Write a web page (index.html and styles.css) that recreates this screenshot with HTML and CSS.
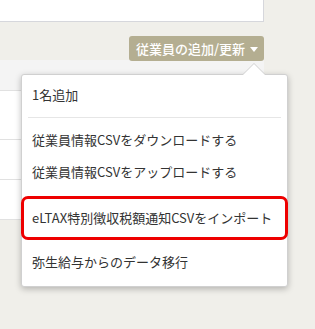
FILE: index.html
```html
<!DOCTYPE html>
<html lang="ja">
<head>
    <meta charset="UTF-8">
    <title>従業員一覧</title>
    <link rel="stylesheet" href="styles.css">
</head>
<body>

    <div class="page">
        <!-- Card above (cut off) -->
        <div class="top-card"></div>

        <!-- Toolbar with dropdown button -->
        <div class="toolbar">
            <button class="menu-button">従業員の追加/更新 <span class="caret"></span></button>
        </div>

        <!-- Employee table behind the menu -->
        <table class="employee-table">
            <thead>
                <tr><th>&nbsp;</th></tr>
            </thead>
            <tbody>
                <tr class="row-tall"><td>&nbsp;</td></tr>
                <tr><td>&nbsp;</td></tr>
                <tr><td>&nbsp;</td></tr>
            </tbody>
        </table>

        <!-- Dropdown menu -->
        <ul class="dropdown">
            <li><a href="#">1名追加</a></li>
            <li class="divider"></li>
            <li><a href="#">従業員情報CSVをダウンロードする</a></li>
            <li><a href="#">従業員情報CSVをアップロードする</a></li>
            <li class="highlight"><a href="#">eLTAX特別徴収税額通知CSVをインポート</a></li>
            <li><a href="#">弥生給与からのデータ移行</a></li>
        </ul>
    </div>

</body>
</html>
```

FILE: styles.css
```css
/* General Styling */
body {
    margin: 0;
    background-color: #f0efea;
    font-family: "Noto Sans CJK JP", "Noto Sans", sans-serif;
    font-size: 13px;
    color: #333333;
}

.page {
    position: relative;
    width: 264px;
    min-height: 329px;
}

/* Card at top */
.top-card {
    height: 21px;
    background-color: #ffffff;
    border-right: 1px solid #d6d7dc;
    border-bottom: 1px solid #d6d7dc;
}

/* Toolbar */
.toolbar {
    display: flex;
    justify-content: flex-end;
    padding-top: 14px;
    height: 38px;
    box-sizing: border-box;
}

.menu-button {
    display: flex;
    align-items: center;
    gap: 5px;
    height: 25px;
    padding: 0 6px 0 7px;
    border: none;
    border-radius: 3px;
    background-color: #b4ae91;
    color: #ffffff;
    font-family: inherit;
    font-size: 13px;
    font-weight: 500;
    line-height: 25px;
    cursor: pointer;
}

.caret {
    width: 0;
    height: 0;
    border-left: 4.5px solid transparent;
    border-right: 4.5px solid transparent;
    border-top: 5px solid #ffffff;
    margin-top: 1px;
}

/* Table */
.employee-table {
    width: 100%;
    border-collapse: collapse;
    background-color: #ffffff;
}

.employee-table th,
.employee-table td {
    padding: 0;
    height: 39px;
    border-bottom: 1px solid #e1e1e1;
}

.employee-table th {
    height: 30px;
    background-color: #f4f4f4;
}

.employee-table .row-tall td {
    height: 48px;
}

/* Dropdown */
.dropdown {
    position: absolute;
    left: 21px;
    top: 74px;
    width: 267px;
    margin: 0;
    padding: 4px 0 8px;
    list-style: none;
    background-color: #ffffff;
    border: 1px solid #d0d0d0;
    border-radius: 3px;
    box-sizing: border-box;
    box-shadow: 0 2px 6px rgba(0, 0, 0, 0.25);
}

.dropdown::before,
.dropdown::after {
    content: "";
    position: absolute;
    width: 0;
    height: 0;
    border-style: solid;
}

.dropdown::before {
    top: -12px;
    left: 220px;
    border-width: 0 12px 12px 12px;
    border-color: transparent transparent #d0d0d0 transparent;
}

.dropdown::after {
    top: -11px;
    left: 221px;
    border-width: 0 11px 11px 11px;
    border-color: transparent transparent #ffffff transparent;
}

.dropdown a {
    display: block;
    padding: 0 10px;
    line-height: 32px;
    color: #333333;
    text-decoration: none;
    white-space: nowrap;
}

.dropdown .divider {
    height: 1px;
    margin: 6px 6px 6px 6px;
    background-color: #e6e6e6;
}

.dropdown .highlight {
    margin: 8px -1px 6px;
    border: 3px solid #ee0000;
    border-radius: 7px;
}

.dropdown .highlight a {
    padding: 0 8px;
    line-height: 38px;
}
```
